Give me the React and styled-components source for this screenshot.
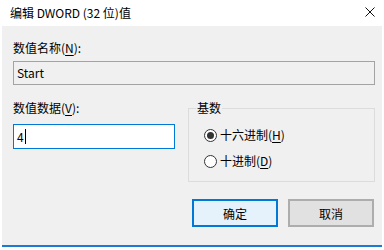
import React from 'react';
import styled, { createGlobalStyle } from 'styled-components';

const Global = createGlobalStyle`
    html, body {
        margin: 0;
        padding: 0;
        background: #fff;
    }
    body {
        font-family: "Noto Sans CJK SC", "Noto Sans", sans-serif;
        font-size: 12px;
        color: #000;
    }
`;

const Window = styled.div`
    width: 384px;
    height: 250px;
    display: flex;
    flex-direction: column;
    background: #fff;
`;

const TitleBar = styled.div`
    height: 26px;
    display: flex;
    align-items: center;
    justify-content: space-between;
    padding: 0 9px 2px 10px;
    box-sizing: border-box;
    font-size: 12px;
`;

const Close = styled.div`
    display: flex;
    align-items: center;
`;

const Body = styled.div`
    margin: 0 2px;
    height: 219px;
    background: #f0f0f0;
    padding: 14px 7px 0 11px;
    box-sizing: border-box;
    display: flex;
    flex-direction: column;
`;

const BottomLine = styled.div`
    margin: 0 2px;
    height: 2px;
    background: #1a7ad4;
`;

const Label = styled.div`
    line-height: 16px;
    height: 16px;
    white-space: nowrap;
`;

const Key = styled.span`
    text-decoration: underline;
    text-underline-offset: 2px;
`;

const TextBox = styled.div`
    height: ${({ h }) => h || 24}px;
    box-sizing: border-box;
    border: 1px solid ${({ focused }) => (focused ? '#0078d7' : '#a3a3a3')};
    background: ${({ focused }) => (focused ? '#fff' : '#f0f0f0')};
    margin-top: ${({ mt }) => mt || 0}px;
    width: ${({ w }) => (w ? `${w}px` : 'auto')};
    display: flex;
    align-items: center;
    padding-left: 3px;
    line-height: 16px;
`;

const Caret = styled.span`
    display: inline-block;
    width: 1px;
    height: 15px;
    background: #000;
    margin-left: 1px;
`;

const Row = styled.div`
    display: flex;
    margin-top: 15px;
    gap: 13px;
`;

const Column = styled.div`
    display: flex;
    flex-direction: column;
`;

const Group = styled.fieldset`
    margin: 0;
    width: 188px;
    height: 82px;
    box-sizing: border-box;
    border: 1px solid #dcdcdc;
    padding: 11px 0 0 15px;
    display: flex;
    flex-direction: column;
    gap: 10px;
`;

const Legend = styled.legend`
    padding: 0 1px;
    margin-left: -8px;
    line-height: 16px;
`;

const Option = styled.label`
    display: flex;
    align-items: center;
    gap: 3px;
    height: 16px;
    line-height: 16px;
`;

const Radio = styled.span`
    width: 13px;
    height: 13px;
    box-sizing: border-box;
    border-radius: 50%;
    border: 1px solid #333;
    background: #fff;
    display: flex;
    align-items: center;
    justify-content: center;
    &::after {
        content: '';
        width: 7px;
        height: 7px;
        border-radius: 50%;
        background: ${({ checked }) => (checked ? '#333' : 'transparent')};
    }
`;

const Buttons = styled.div`
    display: flex;
    justify-content: flex-end;
    gap: 10px;
    margin-top: 17px;
    padding-right: 1px;
`;

const Button = styled.div`
    width: 86px;
    height: 28px;
    box-sizing: border-box;
    border: ${({ primary }) => (primary ? '2px solid #0078d7' : '2px solid #adadad')};
    background: ${({ primary }) => (primary ? '#e5f1fb' : '#e1e1e1')};
    display: flex;
    align-items: center;
    justify-content: center;
`;

export default function App() {
    return (
        <>
            <Global />
            <Window>
                <TitleBar>
                    <span>编辑 DWORD (32 位)值</span>
                    <Close>
                        <svg width="10" height="10" viewBox="0 0 10 10">
                            <path d="M0.5 0.5 L9.5 9.5 M9.5 0.5 L0.5 9.5" stroke="#111" strokeWidth="1" />
                        </svg>
                    </Close>
                </TitleBar>
                <Body>
                    <Label>数值名称(<Key>N</Key>):</Label>
                    <TextBox mt={5}>Start</TextBox>
                    <Row>
                        <Column>
                            <Label>数值数据(<Key>V</Key>):</Label>
                            <TextBox focused w={162} h={25} mt={8}>4<Caret /></TextBox>
                        </Column>
                        <Group>
                            <Legend>基数</Legend>
                            <Option><Radio checked /><span>十六进制(<Key>H</Key>)</span></Option>
                            <Option><Radio /><span>十进制(<Key>D</Key>)</span></Option>
                        </Group>
                    </Row>
                    <Buttons>
                        <Button primary>确定</Button>
                        <Button>取消</Button>
                    </Buttons>
                </Body>
                <BottomLine />
            </Window>
        </>
    );
}
